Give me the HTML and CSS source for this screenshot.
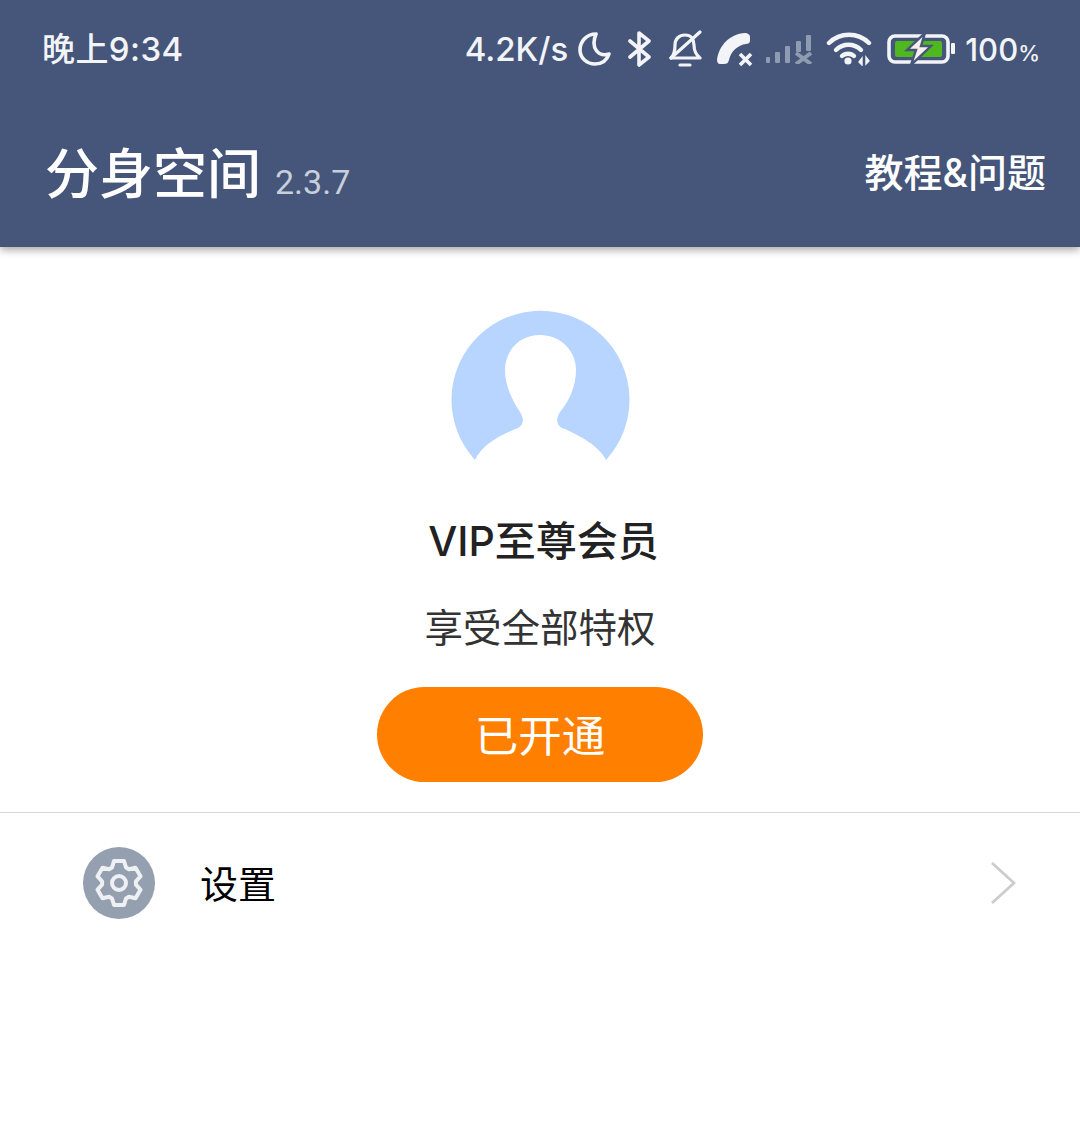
FILE: index.html
```html
<!DOCTYPE html>
<html lang="zh-CN">
<head>
    <meta charset="UTF-8">
    <meta name="viewport" content="width=device-width, initial-scale=1.0">
    <title>分身空间</title>
    <link rel="stylesheet" href="styles.css">
</head>
<body>
    <header class="header">
        <div class="status-bar">
            <span class="status-time">晚上9:34</span>
            <div class="status-right">
                <span class="status-speed">4.2K/s</span>
                <svg class="icon icon-moon" viewBox="0 0 33 34"><path d="M18 2C8 2 2 10 2 18C2 26 9 32 17 32C24 32 29 28 31 22C21 25 12 17 18 2Z" fill="none" stroke="#f2f4f7" stroke-width="3.6" stroke-linejoin="round"/></svg>
                <svg class="icon icon-bt" viewBox="0 0 25 36"><path d="M3 10L22 26L12 34V2L22 10L3 26" fill="none" stroke="#f2f4f7" stroke-width="3.6" stroke-linejoin="round" stroke-linecap="round"/></svg>
                <svg class="icon icon-bell" viewBox="0 0 34 38"><g fill="none" stroke="#f2f4f7" stroke-width="3.2" stroke-linecap="round" stroke-linejoin="round"><path d="M3 28C7 24 7 19 7 15C7 9 11 5 17 5C23 5 26 9 26 15C26 19 27 24 32 28Z"/><path d="M32 2L3 28"/><path d="M12 35H22"/></g></svg>
                <svg class="icon icon-phone" viewBox="0 0 37 36"><path d="M29 2C31 2 34 3 34 6V10C34 12 32 13 30 13C22 14 15 20 13 29C12 32 11 33 8 33H4C2 33 1 31 1 29C3 14 14 3 29 2Z" fill="#f2f4f7"/><path d="M24 23L35 34M35 23L24 34" fill="none" stroke="#f2f4f7" stroke-width="3.6"/></svg>
                <svg class="icon icon-signal" viewBox="0 0 47 30"><g fill="#8f9bb0"><rect x="0" y="23" width="4" height="6" rx="1"/><rect x="9" y="18" width="5" height="11" rx="1"/><rect x="19" y="12" width="5" height="17" rx="1"/><rect x="30" y="7" width="5" height="11" rx="1"/><rect x="40" y="1" width="5" height="16" rx="1"/></g><path d="M30 19L45 30M45 19L30 30" fill="none" stroke="#8f9bb0" stroke-width="4"/></svg>
                <svg class="icon icon-wifi" viewBox="0 0 46 34"><g fill="none" stroke="#f2f4f7" stroke-width="4.4" stroke-linecap="round"><path d="M3 11C14 0 32 0 43 11"/><path d="M10 18C17 11 28 11 35 18"/><path d="M16 24C19 21 25 21 28 24"/></g><circle cx="22" cy="29" r="3.6" fill="#f2f4f7"/><path d="M36 26V33L33 30ZM40 25V32L43 29Z" fill="#f2f4f7" stroke="#f2f4f7" stroke-width="1.4"/></svg>
                <svg class="icon icon-battery" viewBox="0 0 68 30"><rect x="2" y="2" width="59" height="26" rx="6" fill="none" stroke="#f2f4f7" stroke-width="3.6"/><rect x="8" y="7" width="47" height="16" rx="2" fill="#4fb81f"/><rect x="64" y="9" width="4" height="11" rx="1" fill="#f2f4f7"/><path d="M38 -1L20 16H29L24 31L44 12H34Z" fill="#fbeeee" stroke="#45567a" stroke-width="2.4"/></svg>
                <span class="status-battery">100<span class="percent">%</span></span>
            </div>
        </div>
        <div class="toolbar">
            <div class="toolbar-title">
                <h1>分身空间</h1>
                <span class="version">2.3.7</span>
            </div>
            <a class="toolbar-link">教程&amp;问题</a>
        </div>
    </header>

    <main>
        <section class="profile">
            <svg class="avatar" viewBox="450 310 180 152"><path d="M475 460A89 89 0 1 1 606 460C600 447 580 435 562 428C556 425 556 418 560 412C570 400 576 385 576 370C576 350 560 335 540 335C520 335 505 350 505 370C505 385 512 400 520 412C524 418 524 425 518 428C500 435 482 445 475 460Z" fill="#b8d5ff"/></svg>
            <div class="member-name">VIP至尊会员</div>
            <div class="member-desc">享受全部特权</div>
            <button class="open-btn">已开通</button>
        </section>
        <div class="settings-row">
            <span class="settings-icon">
                <svg viewBox="-36 -36 72 72" width="72" height="72"><path d="M-5 -22L5 -22L7 -15.5L9.9 -13.8L16.5 -15.3L21.5 -6.7L16.9 -1.7V1.7L21.5 6.7L16.5 15.3L9.9 13.8L7 15.5L5 22H-5L-7 15.5L-9.9 13.8L-16.5 15.3L-21.5 6.7L-16.9 1.7V-1.7L-21.5 -6.7L-16.5 -15.3L-9.9 -13.8L-7 -15.5Z" fill="none" stroke="#eef0f3" stroke-width="4" stroke-linejoin="round"/><circle r="7" fill="none" stroke="#eef0f3" stroke-width="4"/></svg>
            </span>
            <span class="settings-label">设置</span>
            <svg class="chevron" viewBox="0 0 26 44"><path d="M2 2L24 22L2 42" fill="none" stroke="#cccccc" stroke-width="2.8"/></svg>
        </div>
    </main>
</body>
</html>
```

FILE: styles.css
```css
* {
    box-sizing: border-box;
}
body {
    margin: 0;
    height: 1128px;
    overflow: hidden;
    background: #fff;
    font-family: "Noto Sans CJK SC", "Noto Sans", sans-serif;
}
.header {
    height: 247px;
    background-color: #45567a;
    box-shadow: 0 3px 8px rgba(0, 0, 0, 0.35);
    color: #fff;
}
.status-bar {
    height: 98px;
    display: flex;
    justify-content: space-between;
    align-items: center;
    padding: 0 40px 4px 42px;
    color: #f2f4f7;
    font-family: "Inter", "Noto Sans CJK SC", sans-serif;
    font-size: 33px;
    font-weight: 500;
}
.status-time {
    letter-spacing: 0.4px;
}
.status-right {
    display: flex;
    align-items: center;
    margin-top: 4px;
}
.icon {
    display: block;
    flex: none;
}
.icon-moon {
    width: 33px;
    height: 34px;
    margin-left: 10px;
}
.icon-bt {
    width: 25px;
    height: 36px;
    margin-left: 16px;
}
.icon-bell {
    width: 34px;
    height: 38px;
    margin-left: 16px;
}
.icon-phone {
    width: 37px;
    height: 36px;
    margin-left: 14px;
}
.icon-signal {
    width: 47px;
    height: 30px;
    margin-left: 13px;
}
.icon-wifi {
    width: 46px;
    height: 34px;
    margin-left: 13px;
}
.icon-battery {
    width: 68px;
    height: 30px;
    margin-left: 15px;
}
.status-battery {
    margin-left: 10px;
    font-size: 31px;
}
.percent {
    font-size: 22px;
}
.toolbar {
    height: 149px;
    display: flex;
    justify-content: space-between;
    align-items: center;
    padding: 0 34px 5px 45px;
}
.toolbar-title {
    display: flex;
    align-items: baseline;
}
.toolbar-title h1 {
    margin: 0;
    font-size: 54px;
    font-weight: 500;
}
.version {
    margin-left: 14px;
    font-family: "Roboto", sans-serif;
    font-size: 34px;
    color: #c8cfdc;
}
.toolbar-link {
    font-family: "Inter", "Noto Sans CJK SC", sans-serif;
    font-size: 39px;
    font-weight: 500;
}
.profile {
    display: flex;
    flex-direction: column;
    align-items: center;
    padding-top: 63px;
    border-bottom: 1px solid #d8d8d8;
    padding-bottom: 30px;
}
.avatar {
    display: block;
    width: 180px;
    height: 152px;
}
.member-name {
    margin-top: 49px;
    padding-left: 7px;
    line-height: 60px;
    font-family: "Inter", "Noto Sans CJK SC", sans-serif;
    font-size: 41px;
    font-weight: 500;
    color: #222;
}
.member-desc {
    margin-top: 24px;
    line-height: 60px;
    font-size: 38.5px;
    color: #333;
}
.open-btn {
    margin-top: 32px;
    width: 326px;
    height: 95px;
    border: none;
    padding-bottom: 4px;
    border-radius: 48px;
    background-color: #ff8000;
    color: #fff;
    font-family: inherit;
    font-size: 43.5px;
}
.settings-row {
    height: 140px;
    display: flex;
    align-items: center;
    padding: 0 64px 0 83px;
}
.settings-icon {
    width: 72px;
    height: 72px;
    border-radius: 50%;
    background-color: #94a0b0;
}
.settings-icon svg {
    display: block;
}
.settings-label {
    flex: 1;
    margin-left: 45px;
    padding-bottom: 4px;
    font-size: 38px;
    color: #000;
}
.chevron {
    width: 26px;
    height: 44px;
}
```
